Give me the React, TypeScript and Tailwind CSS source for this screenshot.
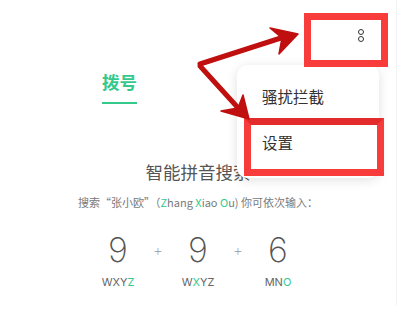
const cjk = '"Noto Sans CJK SC", "Noto Sans", sans-serif';

const keys = [
  { digit: '9', letters: ['W', 'X', 'Y', 'Z'], hit: 3 },
  { digit: '9', letters: ['W', 'X', 'Y', 'Z'], hit: 1 },
  { digit: '6', letters: ['M', 'N', 'O'], hit: 2 },
];

function Letters({ letters, hit }: { letters: string[]; hit: number }) {
  return (
    <span>
      {letters.map((l, i) => (
        <span key={i} className={i === hit ? 'text-[#36c98c]' : ''}>
          {l}
        </span>
      ))}
    </span>
  );
}

export default function App() {
  return (
    <div className="relative w-[417px] h-[318px] bg-white overflow-hidden" style={{ fontFamily: cjk }}>
      {/* phone screen */}
      <div className="w-[397px] h-[305px] border-r border-[#f2f2f2]">
        {/* toolbar */}
        <div className="h-[70px] pt-[29px] pr-[32px] flex justify-end">
          <div className="flex flex-col gap-[1px]">
            <span className="block w-[6px] h-[6px] rounded-full border-[1.5px] border-[#333]"></span>
            <span className="block w-[6px] h-[6px] rounded-full border-[1.5px] border-[#333]"></span>
          </div>
        </div>

        {/* tab */}
        <div className="ml-[102px] w-[35px] flex flex-col">
          <span className="text-[17.5px] leading-[24px] font-bold text-[#36c98c] whitespace-nowrap">拨号</span>
          <span className="mt-[8px] h-[2px] bg-[#36c98c]"></span>
        </div>

        {/* hint */}
        <div className="flex flex-col items-center">
          <div className="mt-[56px] text-[17.5px] leading-[24px] text-[#555]">智能拼音搜索</div>
          <div className="mt-[10px] text-[11px] leading-[16px] text-[#7a7a7a] whitespace-nowrap">
            搜索“张小欧”（<span className="text-[#36c98c]">Z</span>hang <span className="text-[#36c98c]">X</span>iao{' '}
            <span className="text-[#36c98c]">O</span>u) 你可依次输入：
          </div>
        </div>

        <div
          className="mt-[20px] mx-auto w-[200px] grid grid-cols-5 text-center text-[34px] leading-[40px] font-extralight text-[#555]"
          style={{ fontFamily: 'Inter, "Noto Sans", sans-serif' }}
        >
          <span>9</span>
          <span className="text-[16px] text-[#999]">+</span>
          <span>9</span>
          <span className="text-[16px] text-[#999]">+</span>
          <span>6</span>
        </div>
        <div
          className="mt-[5px] mx-auto w-[200px] grid grid-cols-5 text-center text-[11px] leading-[14px] text-[#666]"
          style={{ fontFamily: 'Inter, "Noto Sans", sans-serif' }}
        >
          <Letters letters={keys[0].letters} hit={keys[0].hit} />
          <span></span>
          <Letters letters={keys[1].letters} hit={keys[1].hit} />
          <span></span>
          <Letters letters={keys[2].letters} hit={keys[2].hit} />
        </div>
      </div>

      {/* popup menu */}
      <div className="absolute left-[237px] top-[65px] w-[142px] pt-[9px] pb-[12px] bg-white rounded-[10px] shadow-[0_2px_12px_rgba(0,0,0,0.12)]">
        <div className="h-[46px] pl-[25px] flex items-center text-[15.5px] text-[#333]">骚扰拦截</div>
        <div className="h-[46px] pl-[25px] flex items-center text-[15.5px] text-[#333]">设置</div>
      </div>

      {/* annotation boxes */}
      <div className="absolute left-[304px] top-[13px] w-[84px] h-[54px] border-[7px] border-[#f83b3b]"></div>
      <div className="absolute left-[244px] top-[118px] w-[140px] h-[58px] border-[7px] border-[#f83b3b] border-t-[#e32b2b]"></div>

      {/* annotation arrows */}
      <svg className="absolute left-0 top-0" width="417" height="318" viewBox="0 0 417 318">
        <g fill="#c00f0f" stroke="#c00f0f" strokeLinejoin="round">
          <line x1="200" y1="64" x2="284" y2="37" strokeWidth="5" strokeLinecap="round" />
          <polygon points="298,34 270,28 282,38 279,54" strokeWidth="1.5" />
          <line x1="200" y1="66" x2="240" y2="110" strokeWidth="5" strokeLinecap="round" />
          <polygon points="249,119 221,111 238,108 243,95" strokeWidth="1.5" />
        </g>
      </svg>
    </div>
  );
}
